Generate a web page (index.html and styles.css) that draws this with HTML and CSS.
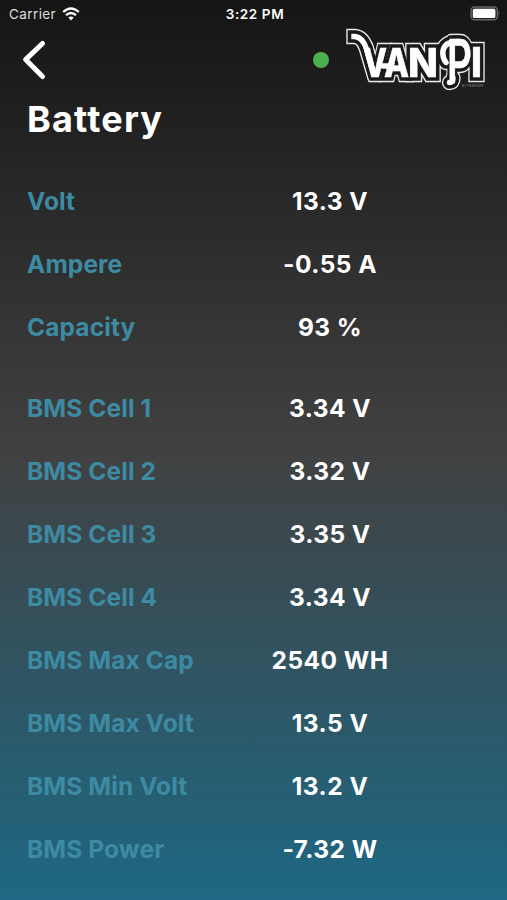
FILE: index.html
```
<!DOCTYPE html>
<html lang="en">
<head>
  <meta charset="UTF-8" />
  <meta name="viewport" content="width=device-width, initial-scale=1.0" />
  <title>Battery</title>
  <link rel="stylesheet" href="styles.css">
</head>
<body>

  <header class="status-bar">
    <div class="carrier">
      <span>Carrier</span>
      <svg class="wifi" viewBox="0 0 18 14" width="18" height="14">
        <path d="M1.2 5 Q9 -2 16.8 5" />
        <path d="M4 8.2 Q9 3.7 14 8.2" />
        <path class="wifi-dot" d="M6.3 10.6 Q9 8.4 11.7 10.6 L9 13.5 Z" />
      </svg>
    </div>
    <span class="time">3:22 PM</span>
    <svg class="battery-icon" viewBox="0 0 31 15" width="31" height="15">
      <rect class="battery-case" x="1" y="1" width="26.5" height="12.8" rx="3.6" />
      <rect class="battery-level" x="2.8" y="2.8" width="22.6" height="9.2" rx="1.6" />
      <path class="battery-cap" d="M28.8 5 Q30.6 7.4 28.8 9.8 Z" />
    </svg>
  </header>

  <nav class="top-nav">
    <svg class="back" viewBox="0 0 26 42" width="26" height="42">
      <path d="M20.5 4.5 L3.6 20.6 L20.5 37.5" />
    </svg>
    <div class="brand">
      <span class="online-dot"></span>
      <svg class="logo" viewBox="344 26 144 68" width="144" height="68">
        <defs>
          <g id="wordmark">
            <text x="363" y="77" font-size="40" textLength="24" lengthAdjust="spacingAndGlyphs">V</text>
            <text x="384" y="77" font-size="40" textLength="25" lengthAdjust="spacingAndGlyphs">A</text>
            <text x="408" y="77" font-size="40" textLength="30" lengthAdjust="spacingAndGlyphs">N</text>
            <text class="logo-p" x="447" y="83" font-size="60" textLength="25" lengthAdjust="spacingAndGlyphs">P</text>
            <text x="471" y="77" font-size="41" textLength="11" lengthAdjust="spacingAndGlyphs">I</text>
          </g>
          <!-- tail of the V, bar of the A and hooks of the P -->
          <g id="swash">
            <path class="tail" d="M354 36.5 H355 Q363 37.5 366.5 49 L373 71" />
            <path d="M383 66 H391" />
            <path d="M458 41.5 Q443.2 41.5 442.8 53 Q442.8 59 446 62.5" />
            <path d="M453 78 Q453 82.5 449.5 82.5" />
          </g>
        </defs>
        <g class="logo-line"><use class="glyphs" href="#wordmark" /><use class="tails" href="#swash" /></g>
        <g class="logo-gap">
          <use class="glyphs" href="#wordmark" /><use class="tails" href="#swash" />
          <rect x="455" y="43" width="12" height="20" />
        </g>
        <g class="logo-fill"><use class="glyphs" href="#wordmark" /><use class="tails" href="#swash" /></g>
        <text class="logo-by" x="462" y="87.3" textLength="22">BY PEKAWAY</text>
      </svg>
    </div>
  </nav>

  <main class="content">
    <h1>Battery</h1>

    <dl class="values">
      <div class="row"><dt>Volt</dt><dd>13.3 V</dd></div>
      <div class="row"><dt>Ampere</dt><dd>-0.55 A</dd></div>
      <div class="row"><dt>Capacity</dt><dd>93 %</dd></div>
    </dl>

    <dl class="values">
      <div class="row"><dt>BMS Cell 1</dt><dd>3.34 V</dd></div>
      <div class="row"><dt>BMS Cell 2</dt><dd>3.32 V</dd></div>
      <div class="row"><dt>BMS Cell 3</dt><dd>3.35 V</dd></div>
      <div class="row"><dt>BMS Cell 4</dt><dd>3.34 V</dd></div>
      <div class="row"><dt>BMS Max Cap</dt><dd>2540 WH</dd></div>
      <div class="row"><dt>BMS Max Volt</dt><dd>13.5 V</dd></div>
      <div class="row"><dt>BMS Min Volt</dt><dd>13.2 V</dd></div>
      <div class="row"><dt>BMS Power</dt><dd>-7.32 W</dd></div>
    </dl>
  </main>

</body>
</html>
```

FILE: styles.css
```
* {
  box-sizing: border-box;
  margin: 0;
  padding: 0;
}

body {
  height: 900px;
  overflow: hidden;
  font-family: Inter, 'Liberation Sans', sans-serif;
  color: #fff;
  background: linear-gradient(180deg, #151515 0%, #414141 50%, #1e6883 100%);
}

.status-bar {
  display: grid;
  grid-template-columns: 1fr auto 1fr;
  align-items: center;
  height: 27px;
  padding: 0 6px 0 9px;
  font-size: 13.5px;
}

.carrier {
  display: flex;
  align-items: center;
  gap: 6px;
  color: #ddd;
  letter-spacing: 0.4px;
}

.wifi {
  fill: none;
  stroke: #fff;
  stroke-width: 2.3;
}

.wifi .wifi-dot {
  fill: #fff;
  stroke: none;
}

.time {
  font-weight: 600;
  letter-spacing: 0.6px;
}

.battery-icon {
  justify-self: end;
}

.battery-case {
  fill: #222;
  stroke: #666;
  stroke-width: 1.4;
}

.battery-level {
  fill: #fff;
}

.battery-cap {
  fill: #666;
}

.top-nav {
  display: flex;
  justify-content: space-between;
  height: 65px;
  padding: 0 19px 0 22px;
}

.back {
  margin-top: 12px;
  fill: none;
  stroke: #fff;
  stroke-width: 5;
  stroke-linecap: round;
  stroke-linejoin: round;
}

.brand {
  display: flex;
  align-items: center;
  gap: 15px;
}

.online-dot {
  width: 16px;
  height: 16px;
  border-radius: 50%;
  background: #4caf50;
}

.logo {
  font-weight: 800;
  will-change: transform;
}

.logo-p {
  font-weight: 600;
  stroke-linejoin: round;
}

.tails {
  fill: none;
  stroke-linecap: round;
}

.tail {
  stroke-linecap: square;
}

.logo-line {
  fill: #e8e8e8;
  stroke: #e8e8e8;
}

.logo-line .glyphs {
  stroke-width: 10.4;
}

.logo-line .tails {
  stroke-width: 15.4;
}

.logo-gap {
  fill: #191919;
  stroke: #191919;
}

.logo-gap .glyphs {
  stroke-width: 7.6;
}

.logo-gap .tails {
  stroke-width: 12.6;
}

.logo-gap rect {
  stroke: none;
}

.logo-fill {
  fill: #fff;
  stroke: #fff;
}

.logo-fill .glyphs {
  stroke-width: 0.5;
}

.logo-fill .tails {
  stroke-width: 5.4;
}

.logo-by {
  font-size: 3.5px;
  font-weight: 400;
  fill: #888;
}

.content {
  padding: 0 27px;
}

h1 {
  height: 77px;
  font-size: 36px;
  font-weight: 700;
  line-height: 54px;
  letter-spacing: 1.2px;
}

.values + .values {
  margin-top: 18px;
}

.row {
  display: grid;
  grid-template-columns: 203px 200px;
  align-items: center;
  height: 63px;
  font-size: 24.5px;
}

.row dt {
  font-weight: 650;
  letter-spacing: 0.1px;
  color: #3d8ba3;
}

.row dd {
  font-weight: 700;
  letter-spacing: 0.45px;
  text-align: center;
  white-space: nowrap;
}
```
